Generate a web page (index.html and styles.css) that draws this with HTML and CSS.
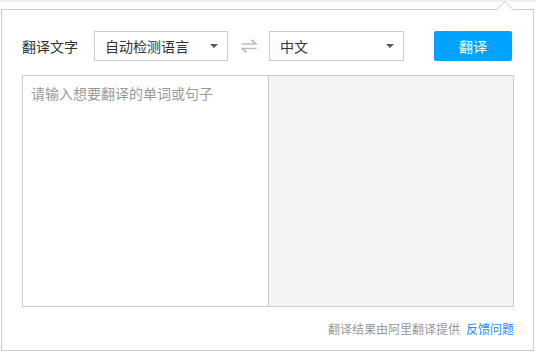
FILE: index.html
```html
<!DOCTYPE html>
<html lang="zh-CN">

<head>
    <meta charset="UTF-8">
    <title>翻译</title>
    <link rel="stylesheet" href="styles.css">
</head>

<body>
    <div class="page-top"></div>
    <div class="popup">
        <div class="toolbar">
            <span class="label">翻译文字</span>
            <div class="select select-from"><span>自动检测语言</span><i class="caret"></i></div>
            <div class="swap">
                <svg width="16" height="14" viewBox="0 0 16 14">
                    <path d="M0.5 5 H15 L10.5 1" fill="none" stroke="#bdbdbd" stroke-width="1.7" />
                    <path d="M15.5 9.5 H1 L5.5 13.5" fill="none" stroke="#bdbdbd" stroke-width="1.7" />
                </svg>
            </div>
            <div class="select select-to"><span>中文</span><i class="caret"></i></div>
            <button class="btn">翻译</button>
        </div>
        <div class="panes">
            <div class="pane pane-input"><span class="placeholder">请输入想要翻译的单词或句子</span></div>
            <div class="pane pane-output"></div>
        </div>
        <div class="footer">
            <span>翻译结果由阿里翻译提供</span><a class="feedback" href="#">反馈问题</a>
        </div>
    </div>
</body>

</html>
```

FILE: styles.css
```css
* {
    box-sizing: border-box;
}

body {
    margin: 0;
    background: #fff;
    font-family: "Noto Sans CJK SC", "Noto Sans", sans-serif;
}

.page-top {
    height: 2px;
    background: #f0f0f0;
}

.popup {
    position: relative;
    margin: 7px 0 0 1px;
    width: 533px;
    height: 342px;
    border: 1px solid #ccc;
    background: #fff;
    padding: 21px 18px 0 20px;
}

.popup::before,
.popup::after {
    content: "";
    position: absolute;
    width: 0;
    height: 0;
    border-style: solid;
    border-color: transparent;
}

.popup::before {
    top: -9px;
    right: 19px;
    border-width: 0 9px 9px 9px;
    border-bottom-color: #ccc;
}

.popup::after {
    top: -8px;
    right: 20px;
    border-width: 0 8px 8px 8px;
    border-bottom-color: #fff;
}

.toolbar {
    display: flex;
    align-items: center;
    height: 30px;
}

.label {
    width: 56px;
    margin-right: 16px;
    font-size: 14px;
    color: #333;
}

.select {
    height: 30px;
    border: 1px solid #ccc;
    padding: 0 9px 0 10px;
    display: flex;
    align-items: center;
    justify-content: space-between;
    font-size: 14px;
    color: #333;
}

.select-from {
    width: 134px;
}

.select-to {
    width: 135px;
}

.caret {
    width: 0;
    height: 0;
    border-left: 4px solid transparent;
    border-right: 4px solid transparent;
    border-top: 4px solid #555;
}

.swap {
    width: 41px;
    display: flex;
    justify-content: center;
    align-items: center;
}

.btn {
    margin-left: 30px;
    width: 78px;
    height: 30px;
    border: 0;
    border-radius: 2px;
    background: #00a3ff;
    color: #fff;
    font-family: inherit;
    font-size: 14px;
}

.panes {
    margin-top: 14px;
    width: 492px;
    height: 232px;
    border: 1px solid #ccc;
    display: grid;
    grid-template-columns: 245px 1fr;
}

.pane-input {
    padding: 7px 8px;
    font-size: 14px;
    line-height: 20px;
}

.placeholder {
    color: #999;
}

.pane-output {
    background: #f4f4f4;
    border-left: 1px solid #ccc;
}

.footer {
    width: 492px;
    margin-top: 13px;
    text-align: right;
    font-size: 12px;
    line-height: 18px;
    color: #999;
}

.feedback {
    margin-left: 6px;
    color: #1a8cff;
    text-decoration: none;
}
```
